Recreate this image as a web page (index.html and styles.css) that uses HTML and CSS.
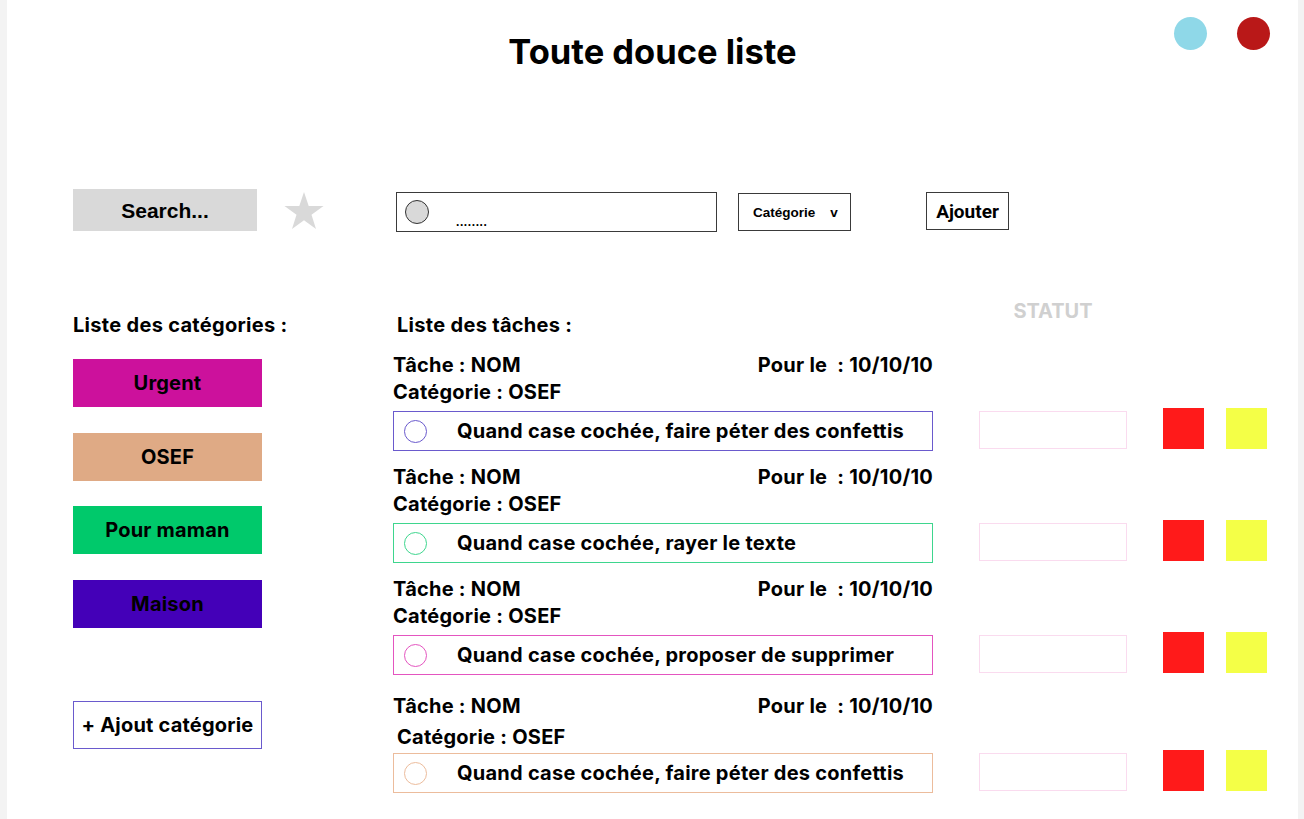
FILE: index.html
```html
<!DOCTYPE html>
<html lang="fr">
<head>
<meta charset="utf-8">
<title>Toute douce liste</title>
<link rel="stylesheet" href="styles.css">
</head>
<body>
<div class="page">
  <header class="header">
    <div></div>
    <h1 class="title">Toute douce liste</h1>
    <div class="dots">
      <span class="dot dot--cyan"></span>
      <span class="dot dot--red"></span>
    </div>
  </header>

  <section class="toolbar">
    <div class="search">Search...</div>
    <svg class="star" width="40" height="37" viewBox="0 0 40 37" aria-hidden="true">
      <polygon points="20,0 24.7,14.1 39.5,14.1 27.5,22.8 32,37 20,28.3 8,37 12.5,22.8 0.5,14.1 15.3,14.1" fill="#d9d9d9"/>
    </svg>
    <div class="new-task">
      <span class="new-task__circle"></span>
      <span class="new-task__text">........</span>
    </div>
    <div class="select">Catégorie<span class="select__arrow">v</span></div>
    <div class="add-btn">Ajouter</div>
  </section>

  <main class="main">
    <aside class="sidebar">
      <h2 class="heading">Liste des catégories :</h2>
      <ul class="cats">
        <li class="cat cat--urgent">Urgent</li>
        <li class="cat cat--osef">OSEF</li>
        <li class="cat cat--maman">Pour maman</li>
        <li class="cat cat--maison">Maison</li>
      </ul>
      <div class="add-cat">+ Ajout catégorie</div>
    </aside>

    <section class="tasks">
      <div class="tasks__head">
        <h2 class="heading tasks__title">Liste des tâches :</h2>
        <div class="status-title">STATUT</div>
      </div>

      <div class="task task--purple">
        <div class="task__meta">
          <div class="task__line"><span>Tâche : NOM</span><span>Pour le&nbsp; : 10/10/10</span></div>
          <div class="task__line">Catégorie : OSEF</div>
        </div>
        <div class="task__row">
          <div class="task__box"><span class="task__check"></span><span class="task__label">Quand case cochée, faire péter des confettis</span></div>
          <div class="status"></div>
          <span class="sq sq--red"></span>
          <span class="sq sq--yellow"></span>
        </div>
      </div>

      <div class="task task--green">
        <div class="task__meta">
          <div class="task__line"><span>Tâche : NOM</span><span>Pour le&nbsp; : 10/10/10</span></div>
          <div class="task__line">Catégorie : OSEF</div>
        </div>
        <div class="task__row">
          <div class="task__box"><span class="task__check"></span><span class="task__label">Quand case cochée, rayer le texte</span></div>
          <div class="status"></div>
          <span class="sq sq--red"></span>
          <span class="sq sq--yellow"></span>
        </div>
      </div>

      <div class="task task--pink">
        <div class="task__meta">
          <div class="task__line"><span>Tâche : NOM</span><span>Pour le&nbsp; : 10/10/10</span></div>
          <div class="task__line">Catégorie : OSEF</div>
        </div>
        <div class="task__row">
          <div class="task__box"><span class="task__check"></span><span class="task__label">Quand case cochée, proposer de supprimer</span></div>
          <div class="status"></div>
          <span class="sq sq--red"></span>
          <span class="sq sq--yellow"></span>
        </div>
      </div>

      <div class="task task--peach task--loose">
        <div class="task__meta">
          <div class="task__line"><span>Tâche : NOM</span><span>Pour le&nbsp; : 10/10/10</span></div>
          <div class="task__line task__cat">Catégorie : OSEF</div>
        </div>
        <div class="task__row">
          <div class="task__box"><span class="task__check"></span><span class="task__label">Quand case cochée, faire péter des confettis</span></div>
          <div class="status"></div>
          <span class="sq sq--red"></span>
          <span class="sq sq--yellow"></span>
        </div>
      </div>
    </section>
  </main>
</div>
</body>
</html>
```

FILE: styles.css
```css
* { box-sizing: border-box; }

html, body {
  margin: 0;
  padding: 0;
}

body {
  background: #f3f3f3;
  font-family: Inter, "Noto Sans", sans-serif;
  color: #000;
}

.page {
  margin: 0 6px 0 7px;
  background: #fff;
  min-height: 819px;
  padding-bottom: 20px;
}

/* Header */
.header {
  display: grid;
  grid-template-columns: 1fr auto 1fr;
  align-items: start;
  padding-top: 17px;
}

.title {
  margin: 15px 0 0;
  font-size: 34.5px;
  line-height: 40px;
  font-weight: 700;
  text-align: center;
}

.dots {
  display: flex;
  justify-content: flex-end;
  gap: 30px;
  padding-right: 28px;
}

.dot {
  width: 33px;
  height: 33px;
  border-radius: 50%;
}
.dot--cyan { background: #8fd8e8; }
.dot--red { background: #b91818; }

/* Toolbar */
.toolbar {
  display: flex;
  align-items: flex-start;
  margin-top: 117px;
  padding-left: 66px;
}

.search {
  width: 184px;
  height: 42px;
  background: #d9d9d9;
  display: flex;
  align-items: center;
  justify-content: center;
  font-family: "Liberation Sans", Arial, sans-serif;
  font-weight: 700;
  font-size: 21px;
  padding-top: 2px;
}

.star {
  margin-left: 27px;
  margin-top: 3px;
  display: block;
}

.new-task {
  margin-left: 72px;
  margin-top: 3px;
  width: 321px;
  height: 40px;
  border: 1px solid #3a3a3a;
  display: flex;
  align-items: center;
  padding-left: 8px;
}

.new-task__circle {
  width: 24px;
  height: 24px;
  border-radius: 50%;
  background: #d9d9d9;
  border: 1px solid #333;
}

.new-task__text {
  margin-left: 27px;
  margin-top: 20px;
  font-family: "Liberation Sans", Arial, sans-serif;
  font-weight: 700;
  font-size: 12px;
  letter-spacing: 0.6px;
}

.select {
  margin-left: 21px;
  margin-top: 4px;
  width: 113px;
  height: 38px;
  border: 1px solid #3a3a3a;
  display: flex;
  align-items: center;
  padding-left: 14px;
  font-family: "Liberation Sans", Arial, sans-serif;
  font-weight: 700;
  font-size: 13.5px;
}

.select__arrow {
  margin-left: 15px;
}

.add-btn {
  margin-left: 75px;
  margin-top: 3px;
  width: 83px;
  height: 38px;
  border: 1px solid #3a3a3a;
  display: flex;
  align-items: center;
  justify-content: center;
  font-family: Roboto, "Liberation Sans", sans-serif;
  font-weight: 700;
  font-size: 19px;
}

/* Main */
.main {
  display: flex;
  margin-top: 66px;
  padding-left: 66px;
}

.heading {
  margin: 0;
  font-size: 20px;
  line-height: 24px;
  font-weight: 700;
  letter-spacing: 0.3px;
  white-space: nowrap;
}

.sidebar {
  width: 189px;
  flex: none;
  padding-top: 15px;
}

.cats {
  list-style: none;
  margin: 22px 0 0;
  padding: 0;
  display: flex;
  flex-direction: column;
  gap: 25.5px;
}

.cat {
  height: 48px;
  display: flex;
  align-items: center;
  justify-content: center;
  font-size: 20px;
  font-weight: 700;
  letter-spacing: 0.2px;
}
.cat--urgent { background: #cc119c; }
.cat--osef { background: #dfaa85; }
.cat--maman { background: #00c96b; }
.cat--maison { background: #4400b8; }

.add-cat {
  margin-top: 73.5px;
  height: 48px;
  border: 1px solid #6a5acd;
  display: flex;
  align-items: center;
  justify-content: center;
  font-size: 20px;
  font-weight: 700;
  letter-spacing: 0.2px;
  white-space: nowrap;
}

/* Tasks */
.tasks {
  margin-left: 131px;
}

.tasks__head {
  display: flex;
  align-items: flex-start;
}

.tasks__title {
  width: 540px;
  margin-top: 15px;
  padding-left: 4px;
}

.status-title {
  margin-left: 46px;
  margin-top: 1px;
  width: 148px;
  text-align: center;
  font-size: 20px;
  line-height: 24px;
  font-weight: 700;
  color: #d0d0d0;
}

.task {
  margin-top: 15px;
}
.task + .task {
  margin-top: 13px;
}
.task + .task--loose {
  margin-top: 18px;
}

.task__meta {
  width: 540px;
}

.task__line {
  display: flex;
  justify-content: space-between;
  font-size: 20px;
  line-height: 27px;
  font-weight: 700;
  letter-spacing: 0.25px;
}

.task--loose .task__cat {
  margin-top: 4px;
  padding-left: 4px;
}

.task__row {
  display: flex;
  align-items: center;
  margin-top: 5px;
}
.task--loose .task__row {
  margin-top: 2px;
}

.task__box {
  width: 540px;
  height: 40px;
  border: 1px solid var(--c);
  display: flex;
  align-items: center;
  padding-left: 10px;
}

.task__check {
  width: 23px;
  height: 23px;
  border-radius: 50%;
  border: 1px solid var(--c);
  flex: none;
}

.task__label {
  margin-left: 30px;
  font-size: 20px;
  font-weight: 700;
  letter-spacing: 0.25px;
}

.task--purple { --c: #6a5acd; }
.task--green { --c: #3ed68e; }
.task--pink { --c: #e455c0; }
.task--peach { --c: #ecbc9c; }

.status {
  margin-left: 46px;
  margin-top: -3px;
  width: 148px;
  height: 38px;
  border: 1px solid #fadbef;
}

.sq {
  width: 41px;
  height: 41px;
  margin-top: -5px;
}
.sq--red { margin-left: 36px; background: #ff1a1a; }
.sq--yellow { margin-left: 22px; background: #f4ff47; }
```
